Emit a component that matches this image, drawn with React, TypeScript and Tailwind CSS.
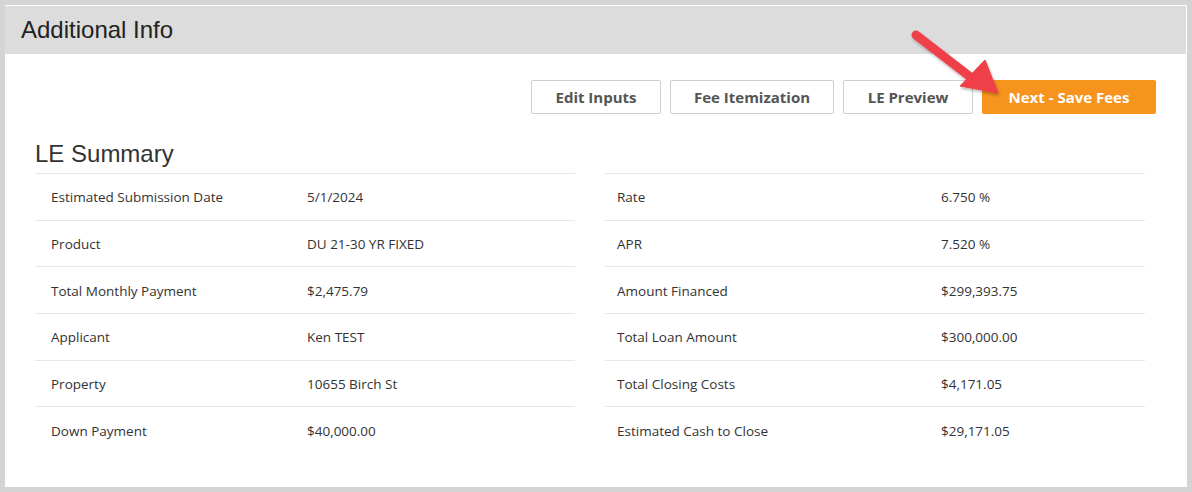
import React from "react";

type Row = { label: string; value: string };

const left: Row[] = [
  { label: "Estimated Submission Date", value: "5/1/2024" },
  { label: "Product", value: "DU 21-30 YR FIXED" },
  { label: "Total Monthly Payment", value: "$2,475.79" },
  { label: "Applicant", value: "Ken TEST" },
  { label: "Property", value: "10655 Birch St" },
  { label: "Down Payment", value: "$40,000.00" },
];

const right: Row[] = [
  { label: "Rate", value: "6.750 %" },
  { label: "APR", value: "7.520 %" },
  { label: "Amount Financed", value: "$299,393.75" },
  { label: "Total Loan Amount", value: "$300,000.00" },
  { label: "Total Closing Costs", value: "$4,171.05" },
  { label: "Estimated Cash to Close", value: "$29,171.05" },
];

function SummaryTable({ rows, labelWidth, padLeft }: { rows: Row[]; labelWidth: string; padLeft: string }) {
  return (
    <div className="w-[540px] border-t border-[#e6e6e6]">
      {rows.map((r, i) => (
        <div
          key={r.label}
          className={`flex h-[46.7px] items-center pt-px text-[13.5px] text-[#333] ${
            i < rows.length - 1 ? "border-b border-[#e6e6e6]" : ""
          }`}
        >
          <div className={`${labelWidth} ${padLeft} shrink-0`}>{r.label}</div>
          <div>{r.value}</div>
        </div>
      ))}
    </div>
  );
}

function Arrow() {
  return (
    <svg className="pointer-events-none absolute left-[900px] top-[22px]" width="110" height="80" viewBox="0 0 110 80">
      <defs>
        <filter id="sh" x="-20%" y="-20%" width="140%" height="140%">
          <feDropShadow dx="1" dy="2" stdDeviation="1.5" floodColor="#000" floodOpacity="0.3" />
        </filter>
      </defs>
      <g filter="url(#sh)" fill="#ef4148" stroke="#ef4148">
        <line x1="11" y1="7" x2="68" y2="51" strokeWidth="9" strokeLinecap="round" />
        <polygon points="93,65 55,58 80,32" strokeWidth="1" strokeLinejoin="round" />
      </g>
    </svg>
  );
}

export default function App() {
  const btn =
    "h-[34px] rounded-[2px] border border-[#cfcfcf] bg-white text-[15px] font-bold text-[#555]";
  return (
    <div className="h-[492px] w-[1192px] bg-[#d4d4d4] p-[5px] pt-[5px] font-['Open_Sans',sans-serif]">
      <div className="relative h-[482px] border-t border-r border-white bg-white">
        <div className="flex h-[48px] items-center bg-[#dcdcdc] pl-[16px] font-['Liberation_Sans',Arial,sans-serif] text-[24px] text-[#222]">
          Additional Info
        </div>
        <div className="flex justify-end gap-[9px] pr-[30px] pt-[26px]">
          <button className={`${btn} w-[130px]`}>Edit Inputs</button>
          <button className={`${btn} w-[164px]`}>Fee Itemization</button>
          <button className={`${btn} w-[130px]`}>LE Preview</button>
          <button className="h-[34px] w-[174px] rounded-[2px] bg-[#f7941d] text-[15px] font-bold text-white">
            Next - Save Fees
          </button>
        </div>
        <div className="pl-[30px] pt-[24px] font-['Liberation_Sans',Arial,sans-serif] text-[24px] leading-[32px] text-[#333]">
          LE Summary
        </div>
        <div className="mt-[3px] flex gap-[30px] pl-[30px]">
          <SummaryTable rows={left} labelWidth="w-[272px]" padLeft="pl-[16px]" />
          <SummaryTable rows={right} labelWidth="w-[336px]" padLeft="pl-[12px]" />
        </div>
        <Arrow />
      </div>
    </div>
  );
}
